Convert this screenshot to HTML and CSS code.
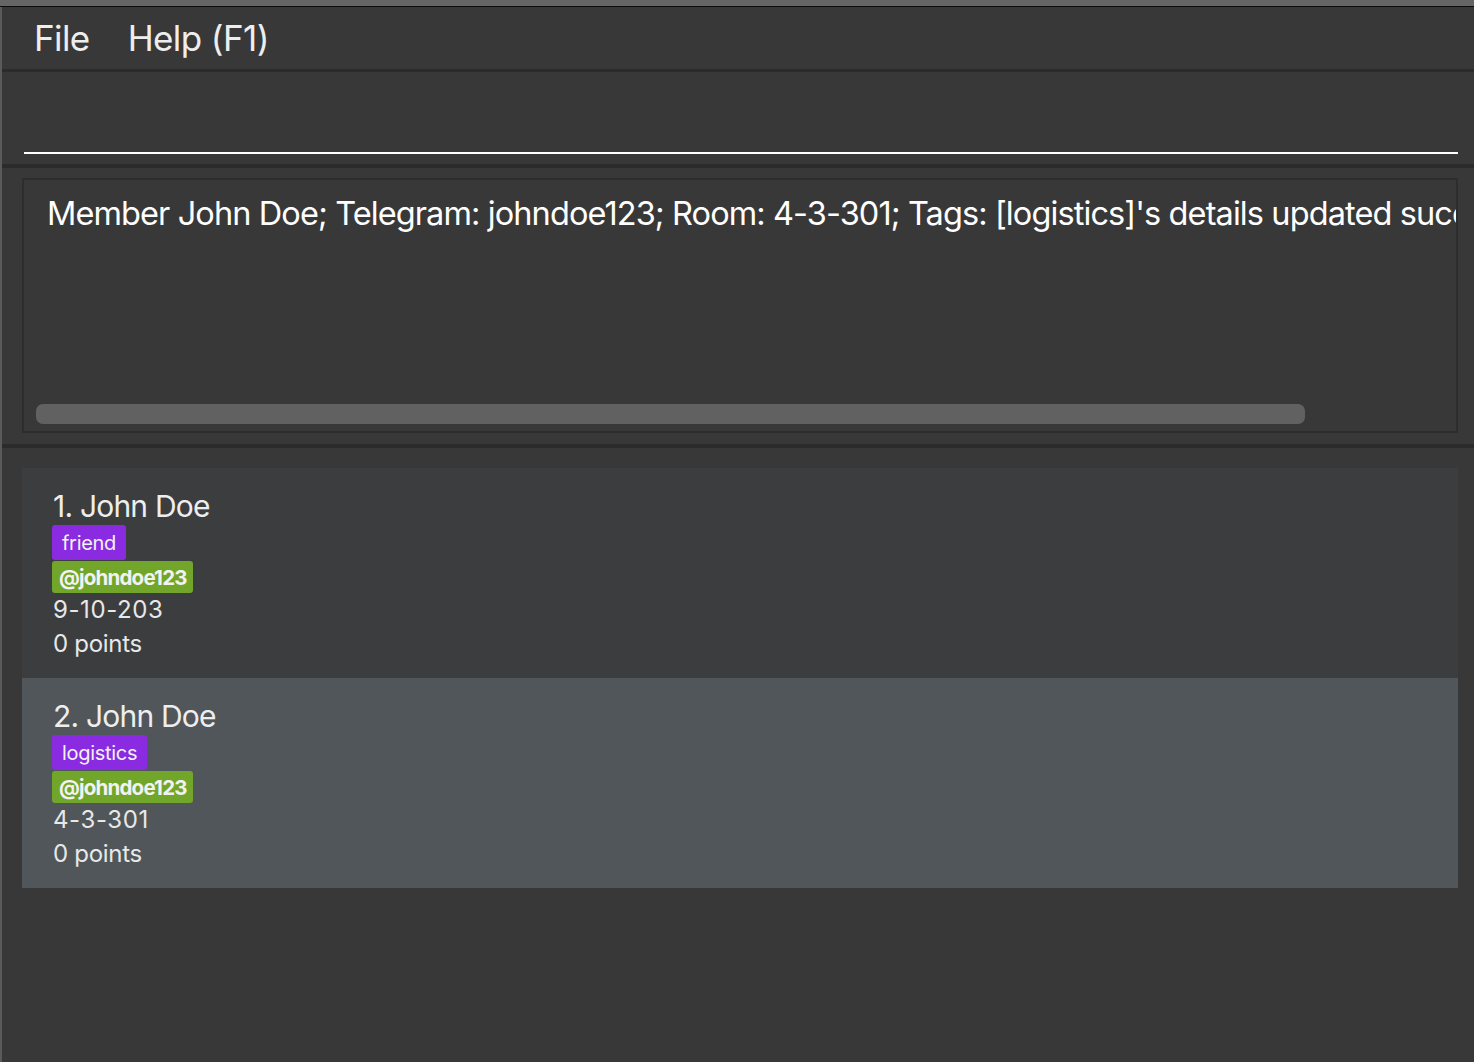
FILE: index.html
```html
<!DOCTYPE html>
<html lang="en">
<head>
<meta charset="utf-8">
<title>Address Book</title>
<link rel="stylesheet" href="styles.css">
</head>
<body>
<div class="titlebar"></div>
<div class="app">
  <div class="edge"></div>
  <div class="main">
    <nav class="menubar">
      <span class="menu-item">File</span>
      <span class="menu-item">Help (F1)</span>
    </nav>
    <div class="sep sep-3"></div>
    <div class="command">
      <div class="command-input"></div>
    </div>
    <div class="sep sep-4"></div>
    <div class="result">
      <div class="result-box">
        <div class="result-text">Member John Doe; Telegram: johndoe123; Room: 4-3-301; Tags: [logistics]'s details updated successfully.</div>
        <div class="hscroll"><div class="hscroll-thumb"></div></div>
      </div>
    </div>
    <div class="sep sep-4"></div>
    <div class="list">
      <div class="card">
        <div class="card-name">1. John Doe</div>
        <div class="tags"><span class="tag">friend</span></div>
        <div class="handle-row"><span class="handle">@johndoe123</span></div>
        <div class="card-line room">9-10-203</div>
        <div class="card-line">0 points</div>
      </div>
      <div class="card card-selected">
        <div class="card-name">2. John Doe</div>
        <div class="tags"><span class="tag">logistics</span></div>
        <div class="handle-row"><span class="handle">@johndoe123</span></div>
        <div class="card-line room">4-3-301</div>
        <div class="card-line">0 points</div>
      </div>
    </div>
  </div>
</div>
</body>
</html>
```

FILE: styles.css
```css
* { box-sizing: border-box; }
html, body {
  margin: 0;
  padding: 0;
  height: 100%;
  background: #383838;
  font-family: Inter, "Noto Sans", "Liberation Sans", sans-serif;
  color: #ffffff;
  overflow: hidden;
}
.titlebar {
  height: 7px;
  background: #656565;
  border-bottom: 1px solid #0c0c0c;
}
.app {
  display: flex;
  height: calc(100% - 7px);
}
.edge {
  width: 2px;
  flex: none;
  background: #5a5a5a;
}
.main {
  flex: 1;
  min-width: 0;
  display: flex;
  flex-direction: column;
  background: #383838;
}
.menubar {
  height: 62px;
  display: flex;
  align-items: center;
  padding-left: 32px;
  gap: 38px;
}
.menu-item {
  font-size: 35px;
  color: #eeeeee;
  letter-spacing: -0.6px;
}
.sep { background: #2b2b2b; flex: none; }
.sep-3 { height: 3px; }
.sep-4 { height: 4px; }
.command {
  height: 92px;
  padding: 0 16px 0 22px;
}
.command-input {
  height: 82px;
  border-bottom: 2px solid #ffffff;
}
.result {
  height: 276px;
  padding: 10px 16px 11px 20px;
}
.result-box {
  height: 100%;
  min-width: 0;
  border: 2px solid #2d2d2d;
  display: flex;
  flex-direction: column;
  overflow: hidden;
}
.result-text {
  flex: 1;
  min-width: 0;
  padding: 14px 0 0 23px;
  font-size: 32.5px;
  letter-spacing: -0.9px;
  white-space: nowrap;
  overflow: hidden;
  color: #ffffff;
}
.hscroll {
  height: 27px;
  padding: 0 0 7px 12px;
}
.hscroll-thumb {
  width: 1269px;
  height: 20px;
  background: #616161;
  border-radius: 7px;
}
.list {
  padding: 20px 16px 0 20px;
  display: flex;
  flex-direction: column;
}
.card {
  height: 210px;
  background: #3c3d3f;
  padding: 19px 0 0 30px;
}
.card-selected { background: #51565a; }
.card-name {
  font-size: 30px;
  line-height: 38px;
  color: #eeeeee;
  letter-spacing: -0.8px;
  padding-left: 1px;
}
.tags { display: flex; height: 36px; }
.tag {
  display: inline-flex;
  align-items: center;
  height: 35px;
  padding: 0 10px;
  background: #8a2be2;
  border-radius: 3px;
  font-size: 20px;
  color: #f2f2f2;
  letter-spacing: -0.3px;
}
.handle-row { display: flex; height: 32px; }
.handle {
  display: inline-flex;
  align-items: center;
  height: 32px;
  padding: 0 6px 0 7px;
  background: #71a62a;
  border-radius: 3px;
  font-size: 20.5px;
  font-weight: 700;
  color: #f2f2f2;
  letter-spacing: -0.8px;
}
.card-line {
  font-size: 24px;
  line-height: 34px;
  color: #e8e8e8;
  padding-left: 1px;
  letter-spacing: -0.3px;
}
.card-line.room { letter-spacing: 0.6px; }
```
